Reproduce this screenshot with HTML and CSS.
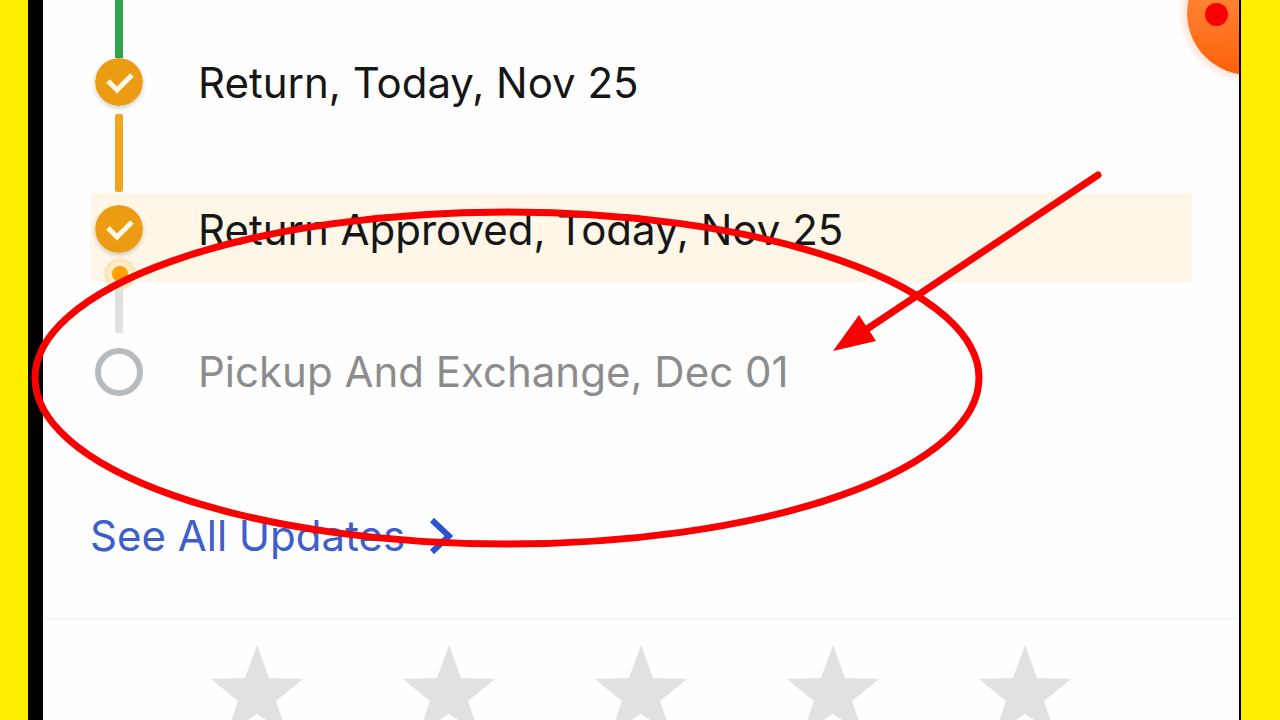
FILE: index.html
```html
<!DOCTYPE html>
<html lang="en">
<head>
    <meta charset="UTF-8">
    <meta name="viewport" content="width=device-width, initial-scale=1.0">
    <title>Order Updates</title>
    <link rel="stylesheet" href="styles.css">
</head>
<body>

    <main class="phone">
        <ol class="steps">
            <li class="step">
                <div class="rail">
                    <span class="line line-start"></span>
                    <svg class="marker" viewBox="0 0 48 48" aria-hidden="true">
                        <circle cx="24" cy="24" r="24" fill="#ec9c13"/>
                        <path d="M13 23L22 32L37 17" fill="none" stroke="#fff8e6" stroke-width="5"/>
                    </svg>
                    <span class="line line-done"></span>
                </div>
                <span class="label">Return, Today, Nov 25</span>
            </li>
            <li class="step step-active">
                <div class="rail">
                    <svg class="marker" viewBox="0 0 48 48" aria-hidden="true">
                        <circle cx="24" cy="24" r="24" fill="#ec9c13"/>
                        <path d="M13 23L22 32L37 17" fill="none" stroke="#fff8e6" stroke-width="5"/>
                    </svg>
                    <span class="line line-next"><i class="pulse"></i></span>
                </div>
                <span class="label">Return Approved, Today, Nov 25</span>
            </li>
            <li class="step step-pending">
                <div class="rail">
                    <span class="marker ring"></span>
                </div>
                <span class="label">Pickup And Exchange, Dec 01</span>
            </li>
        </ol>

        <a class="updates" href="#">
            See All Updates
            <svg width="24" height="36" viewBox="0 0 24 36" aria-hidden="true">
                <path d="M3 2L20 18L3 34" fill="none" stroke="#2b53cf" stroke-width="6"/>
            </svg>
        </a>

        <div class="rating">
            <button type="button" aria-label="1 star"><svg viewBox="0 0 92 88"><path d="M46 0L58 33L92 34L65 56L76 88L46 69L16 88L27 56L0 34L34 33Z"/></svg></button>
            <button type="button" aria-label="2 stars"><svg viewBox="0 0 92 88"><path d="M46 0L58 33L92 34L65 56L76 88L46 69L16 88L27 56L0 34L34 33Z"/></svg></button>
            <button type="button" aria-label="3 stars"><svg viewBox="0 0 92 88"><path d="M46 0L58 33L92 34L65 56L76 88L46 69L16 88L27 56L0 34L34 33Z"/></svg></button>
            <button type="button" aria-label="4 stars"><svg viewBox="0 0 92 88"><path d="M46 0L58 33L92 34L65 56L76 88L46 69L16 88L27 56L0 34L34 33Z"/></svg></button>
            <button type="button" aria-label="5 stars"><svg viewBox="0 0 92 88"><path d="M46 0L58 33L92 34L65 56L76 88L46 69L16 88L27 56L0 34L34 33Z"/></svg></button>
        </div>

        <button class="record" type="button" aria-label="Record"><span></span></button>
    </main>

    <!-- Hand drawn circle and arrow -->
    <svg class="notes" width="1280" height="720" viewBox="0 0 1280 720" aria-hidden="true">
        <ellipse cx="507" cy="378" rx="472" ry="166" fill="none" stroke="#fa0000" stroke-width="7"/>
        <path d="M1098 175L864 331" stroke="#fa0000" stroke-width="7" stroke-linecap="round"/>
        <path d="M833 351L859 315L876 341Z" fill="#fa0000"/>
    </svg>

</body>
</html>
```
FILE: styles.css
```css
* {
    box-sizing: border-box;
}

body {
    margin: 0;
    padding: 0 39px 0 28px;
    height: 100vh;
    overflow: hidden;
    position: relative;
    background: #ffee00;
    font-family: Inter, sans-serif;
    font-size: 42px;
    line-height: 48px;
    color: #161616;
}

.phone {
    position: relative;
    height: 100%;
    overflow: hidden;
    background: #fefefe;
    border-left: 15px solid #000;
    border-right: 2px solid #000;
}

/* Timeline */
.steps {
    list-style: none;
    margin: 0;
    padding: 0 47px;
}

.step {
    display: flex;
    gap: 50px;
    height: 193px;
    padding-right: 12px;
    border-radius: 4px;
}

.label {
    padding-top: 59px;
    white-space: nowrap;
}

.rail {
    display: flex;
    flex-direction: column;
    align-items: center;
    width: 58px;
    flex-shrink: 0;
}

.marker {
    width: 48px;
    height: 48px;
    flex-shrink: 0;
    border-radius: 50%;
    box-shadow: 0 2px 4px rgba(0, 0, 0, 0.2);
}

.line {
    width: 8px;
    flex-shrink: 0;
    border-radius: 2px;
}

.line-start {
    height: 58px;
    border-radius: 0;
    background: #2fa24c;
}

.line-done {
    height: 78px;
    margin-top: 8px;
    background: #f4a51f;
}

.line-next {
    position: relative;
    height: 73px;
    margin-top: 7px;
    background: #e0e0e0;
}

.step-active {
    height: 89px;
    background: #fef7e8;
}

.step-active .rail {
    padding-top: 12px;
}

.step-active .label {
    padding-top: 13px;
}

/* Dot showing current progress */
.pulse {
    position: absolute;
    top: 6px;
    left: -3px;
    width: 16px;
    height: 16px;
    border-radius: 50%;
    background: #ff9f00;
    box-shadow: 0 0 0 4px #fdecc9, 0 0 0 8px #fde6bb;
}

.step-pending {
    height: auto;
    margin-top: 66px;
    color: #8c8c8c;
}

.step-pending .label {
    padding-top: 0;
}

.ring {
    border: 6px solid #b7babf;
    box-shadow: none;
}

/* Link */
.updates {
    display: flex;
    align-items: center;
    gap: 24px;
    width: max-content;
    margin: 116px 0 0 47px;
    color: #3d5fcb;
    text-decoration: none;
}

/* Stars */
.rating {
    display: grid;
    grid-template-columns: repeat(5, 92px);
    gap: 100px;
    justify-content: center;
    margin: 57px 3px 0;
    padding-top: 25px;
    border-top: 3px solid #f6f6f6;
}

.rating button {
    padding: 0;
    border: 0;
    background: none;
    cursor: pointer;
}

.rating svg {
    display: block;
    width: 92px;
    height: 88px;
    fill: #e1e1e1;
}

/* Floating record button */
.record {
    position: absolute;
    top: -49px;
    right: -72px;
    width: 124px;
    height: 124px;
    padding: 0;
    border: 0;
    border-radius: 50%;
    background: linear-gradient(#ff9a4a, #ff5f0a);
    box-shadow: 0 0 4px 6px #fdebe1;
}

.record span {
    position: absolute;
    top: 52px;
    left: 18px;
    width: 23px;
    height: 23px;
    border-radius: 50%;
    background: #fa0000;
}

.notes {
    position: absolute;
    top: 0;
    left: 0;
}
```
